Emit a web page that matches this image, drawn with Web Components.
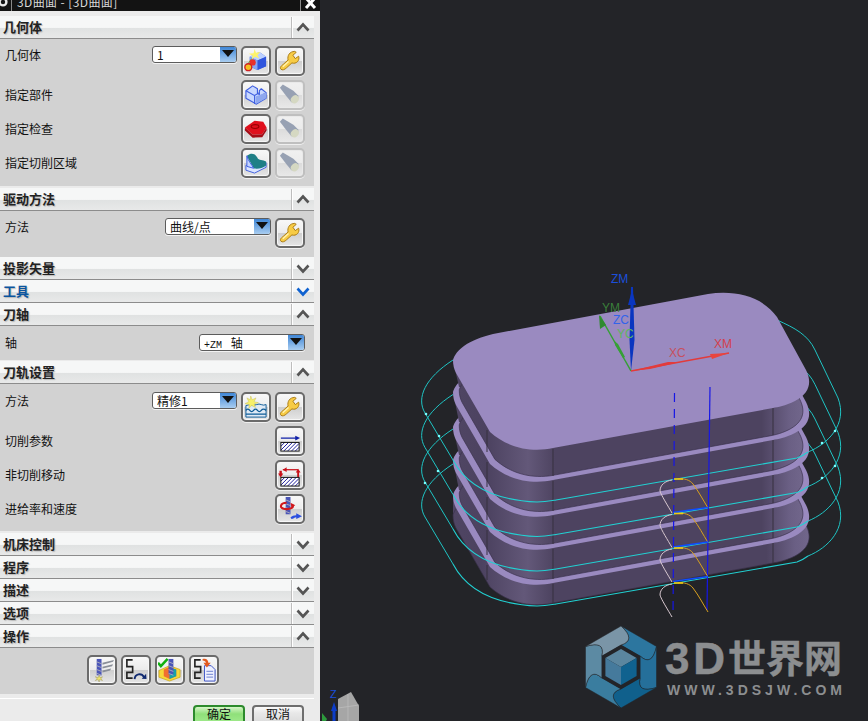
<!DOCTYPE html>
<html>
<head>
<meta charset="utf-8">
<title>3D曲面</title>
<style>
  html, body { margin: 0; height: 100%; background: #232428; overflow: hidden; }
  body { font: 12px "Noto Sans CJK SC", "Liberation Sans", sans-serif; }
</style>
</head>
<body>
<nx-app>
  <nx-dialog caption="3D曲面 - [3D曲面]">
    <nx-section caption="几何体" open style="--pb:8px;--mb:2px">
      <nx-row label="几何体" top>
        <nx-combo style="--w:85px">1</nx-combo>
        <nx-tool icon="geom"></nx-tool>
        <nx-tool icon="wrench"></nx-tool>
      </nx-row>
      <nx-row label="指定部件"><nx-tool icon="part"></nx-tool><nx-tool icon="flash" off></nx-tool></nx-row>
      <nx-row label="指定检查"><nx-tool icon="check"></nx-tool><nx-tool icon="flash" off></nx-tool></nx-row>
      <nx-row label="指定切削区域"><nx-tool icon="area"></nx-tool><nx-tool icon="flash" off></nx-tool></nx-row>
    </nx-section>
    <nx-section caption="驱动方法" open style="--pb:9px">
      <nx-row label="方法" top>
        <nx-combo style="--w:106px">曲线/点</nx-combo>
        <nx-tool icon="wrench"></nx-tool>
      </nx-row>
    </nx-section>
    <nx-section caption="投影矢量"></nx-section>
    <nx-section caption="工具" hot></nx-section>
    <nx-section caption="刀轴" open style="--pt:8px;--pb:9px;--mb:1px">
      <nx-row label="轴" top>
        <nx-combo style="--w:106px"><span style="font:10px 'Liberation Mono',monospace">+ZM </span> 轴</nx-combo>
      </nx-row>
    </nx-section>
    <nx-section caption="刀轨设置" open style="--pt:8px;--pb:7px;--mb:2px">
      <nx-row label="方法" top>
        <nx-combo style="--w:85px">精修1</nx-combo>
        <nx-tool icon="method"></nx-tool>
        <nx-tool icon="wrench"></nx-tool>
      </nx-row>
      <nx-row label="切削参数"><nx-tool icon="cut"></nx-tool></nx-row>
      <nx-row label="非切削移动"><nx-tool icon="noncut"></nx-tool></nx-row>
      <nx-row label="进给率和速度"><nx-tool icon="feed"></nx-tool></nx-row>
    </nx-section>
    <nx-section caption="机床控制"></nx-section>
    <nx-section caption="程序"></nx-section>
    <nx-section caption="描述"></nx-section>
    <nx-section caption="选项"></nx-section>
    <nx-section caption="操作" open center style="--pb:9px">
      <nx-row center>
        <nx-tool icon="gen"></nx-tool><nx-tool icon="replay"></nx-tool><nx-tool icon="verify"></nx-tool><nx-tool icon="list"></nx-tool>
      </nx-row>
    </nx-section>
    <nx-footer></nx-footer>
  </nx-dialog>
  <cam-view><site-logo></site-logo></cam-view>
</nx-app>

<script>
class NxApp extends HTMLElement {
  constructor() {
    super()
    this.attachShadow({ mode: 'open' })
    this.shadowRoot.innerHTML = `
      <style>
        :host { display: flex; width: 868px; height: 721px; overflow: hidden; }
      </style>
      <slot></slot>`
  }
}

class NxDialog extends HTMLElement {
  constructor() {
    super()
    this.attachShadow({ mode: 'open' })
  }
  connectedCallback() {
    this.shadowRoot.innerHTML = `
      <style>
        :host { display: block; width: 320px; height: 721px; flex: none; background: #ebebeb; overflow: hidden; }
        #bar { height: 11px; background: #131313; color: #d8d8d8; display: flex; overflow: hidden; }
        #gear { width: 11px; border-right: 1px solid #8a8a8a; flex: none; }
        #gear svg { display: block; margin-top: -3px; margin-left: -2px; }
        #cap { flex: 1; line-height: 12px; margin-top: -4px; padding-left: 5px; font-size: 12px; letter-spacing: .4px; white-space: pre; }
        #close { width: 19px; border-left: 1px solid #8a8a8a; flex: none; }
        #close svg { display: block; margin: -1px 0 0 3px; }
        #main { padding: 5px 6px 0 0; }
      </style>
      <div id="bar">
        <div id="gear"><svg width="11" height="11" viewBox="0 0 11 11"><circle cx="5" cy="5" r="3.4" fill="none" stroke="#e8e8e8" stroke-width="2.4"/></svg></div>
        <div id="cap">${this.getAttribute('caption')}</div>
        <div id="close"><svg width="14" height="12" viewBox="0 0 14 12"><path d="M2 -1L11 9M11 -1L2 9" stroke="#fff" stroke-width="3"/></svg></div>
      </div>
      <div id="main"><slot></slot></div>`
  }
}

class NxSection extends HTMLElement {
  constructor() {
    super()
    this.attachShadow({ mode: 'open' })
  }
  connectedCallback() {
    const open = this.hasAttribute('open')
    const hot = this.hasAttribute('hot')
    const chev = open ? 'M-5.5 3L0 -3L5.5 3' : 'M-5.5 -3L0 3L5.5 -3'
    this.shadowRoot.innerHTML = `
      <style>
        :host { display: block; margin-bottom: var(--mb, 0); }
        header {
          height: 22px; display: flex; border-bottom: 1px solid #8c8c8c;
          background: linear-gradient(#f6f7f7 0, #f6f7f7 52%, #e0e2e2 56%, #e8e9e9 100%);
        }
        h2 {
          flex: 1; margin: 0; padding-left: 3px; font-size: 13px; font-weight: 700; line-height: 22px;
          color: ${hot ? '#0b559f' : '#222'}; text-shadow: 1px 1px 1px #b8b8b8;
        }
        .chev { width: 22px; flex: none; margin-top: 1px; border-left: 1px solid #bdbdbd; box-shadow: inset 1px 0 0 #fff; }
        .chev svg { display: block; }
        #body {
          display: ${open ? 'flex' : 'none'}; flex-direction: column; gap: 4px;
          padding: var(--pt, 7px) 9px var(--pb, 8px) 5px; background: #d2d2d2;
        }
      </style>
      <header>
        <h2>${this.getAttribute('caption')}</h2>
        <div class="chev"><svg width="22" height="21" viewBox="-11 -10.5 22 21"><path d="${chev}" fill="none" stroke="${hot ? '#0f62d0' : '#555'}" stroke-width="2.6"/></svg></div>
      </header>
      <div id="body"><slot></slot></div>`
  }
}

class NxRow extends HTMLElement {
  constructor() {
    super()
    this.attachShadow({ mode: 'open' })
  }
  connectedCallback() {
    const label = this.getAttribute('label')
    const top = this.hasAttribute('top')
    const center = this.hasAttribute('center')
    this.shadowRoot.innerHTML = `
      <style>
        :host { display: flex; gap: 4px; align-items: flex-start; color: #111; font-size: 12px; ${center ? 'justify-content: center; margin-right: 5px;' : ''} }
        #label { flex: 1; ${top ? 'line-height: 17px;' : 'align-self: center; line-height: 16px;'} }
      </style>
      ${center ? '' : `<div id="label">${label}</div>`}
      <slot></slot>`
  }
}

class NxCombo extends HTMLElement {
  constructor() {
    super()
    this.attachShadow({ mode: 'open' })
    this.shadowRoot.innerHTML = `
      <style>
        :host {
          display: flex; width: var(--w, 86px); height: 17px; box-sizing: border-box; flex: none;
          border: 1px solid #5c5c5c; border-radius: 3px; background: #fff; overflow: hidden;
          box-shadow: 0 1px 0 #f2f2f2; color: #111;
        }
        #txt { flex: 1; padding-left: 4px; font-size: 12px; line-height: 15px; white-space: pre; }
        #btn { width: 16px; flex: none; background: linear-gradient(#3f86d6, #a9cdf0); display: flex; justify-content: center; }
        #btn svg { display: block; margin-top: 3px; }
      </style>
      <div id="txt"><slot></slot></div>
      <div id="btn"><svg width="12" height="8" viewBox="0 0 12 8"><path d="M0 0H12L6 7Z" fill="#111"/></svg></div>`
  }
}

const hatch = (x, y, w, h) => {
  let d = ''
  for (let i = -h; i < w; i += 4) {
    const x1 = Math.max(i, 0), y1 = h - (x1 - i), x2 = Math.min(i + h, w), y2 = h - (x2 - i)
    d += `M${x + x1} ${y + y1}L${x + x2} ${y + y2}`
  }
  return `<rect x="${x}" y="${y}" width="${w}" height="${h}" fill="#fff"/><path d="${d}" stroke="#1a1a9a" stroke-width="1"/><rect x="${x}" y="${y}" width="${w}" height="${h}" fill="none" stroke="#111" stroke-width="1"/>`
}
const tool = (x, y, h) => `<rect x="${x}" y="${y}" width="5" height="${h}" fill="#4a55b8"/><path d="M${x} ${y + 3}l5 2M${x} ${y + 7}l5 2M${x} ${y + 11}l5 2M${x} ${y + 15}l5 2" stroke="#aab" stroke-width="1"/>`
const ess = `<path d="M8 2H2V9H8V15H2V21H8" transform="translate(1 0)" fill="none" stroke="#222" stroke-width="1.7"/>`

const ICONS = {
  wrench: `<path d="M3 21C1.500 19 3.500 17.500 6 15.500L10.500 11.500C9.500 7 12 2.500 17.500 2.500L19 3.500L15.500 6.500L18 10L21.500 7.500C23 12 19 16 14.500 14.500L9 19.500C7 21.500 4.500 22.500 3 21Z" fill="#f7cb45" stroke="#a97a12" stroke-width="1"/><path d="M5 18.500L11 13" stroke="#fff3b0" stroke-width="1.500"/>`,
  geom: `<path d="M6 8L16 3L23 8V18L14 22L6 18Z" fill="#3d63e0"/><path d="M6 8L16 3L23 8L14 12Z" fill="#bcd0ff"/><path d="M14 12L23 8V18L14 22Z" fill="#2f55dd"/><path d="M6 8L14 12V22L6 18Z" fill="#86a6f5"/><path d="M11 0L12.500 4L17 3L14 6.500L16 10L11.500 8L8 11L9 7L5 5L10 4.500Z" fill="#fdf46a"/><path d="M8 10L3 17" stroke="#5b3" stroke-width="1"/><circle cx="9" cy="14" r="3.300" fill="#e8302a"/><circle cx="4.500" cy="19" r="3.600" fill="#f4c020" stroke="#d02020" stroke-width="1.400"/>`,
  part: `<path d="M2 8L9 3L14 6V11L16 12V8L18 6L23 10V16L13 22L2 16Z" fill="#c9d8ff" stroke="#3f5fe0" stroke-width="1.200" stroke-linejoin="round"/><path d="M2 8L11 13V22M11 13L16 10M23 10L14 15.500" fill="none" stroke="#3f5fe0" stroke-width="1.100"/><path d="M12 14L23 10V16L12 22Z" fill="#8fa8ef"/>`,
  flash: `<path d="M2 5L5 1.500L16 8L21 13C22 17 19 21 14 20L9 14Z" fill="#97a1b3"/><ellipse cx="17.500" cy="17" rx="4.500" ry="3.800" fill="#d5d8c2" transform="rotate(-45 17.500 17)"/>`,
  check: `<path d="M1 11L11 4L20 5L23.500 11L19 18L9 18.500Z" fill="#e00f1c"/><path d="M9 18.500L19 18L23.500 11V14L19 21L9 21.500L1 14V11Z" fill="#a40c16"/><ellipse cx="11.500" cy="10" rx="4" ry="2" fill="none" stroke="#900" stroke-width="1.200"/>`,
  area: `<path d="M2 15V20L11 23L23 17V12Z" fill="#dbe5ff" stroke="#3f5fe0"/><path d="M3 5C8 1 12 3 14 7C15 10 20 9 23 11V15C19 18 14 19 10 18C8 13 5 10 3 5Z" fill="#1f7f86"/><path d="M3 5C4 10 8 14 10 18L3 16Z" fill="#c5d5ff" stroke="#3f5fe0" stroke-width="1"/>`,
  method: `<path d="M2 11C6 9 9 12 13 10C17 8 19 12 23 10V23H2Z" fill="#dfeaf5" stroke="#0d5b96" stroke-width="1"/><path d="M2 16Q4 13.500 6 16T10 16T14 16T18 16T23 16M2 20H23" fill="none" stroke="#0d5b96" stroke-width="1.400"/><path d="M7 1L8.500 5L12.500 3L10.500 7L15 8L10.500 9.500L12 13L8 11L5 14L5.500 10L1 9L5 7L3 3L6.500 5Z" fill="#f7f06a" stroke="#c9c25a" stroke-width=".5"/>`,
  cut: `<path d="M3 9.500H20" stroke="#0f1fa8" stroke-width="1.300"/><path d="M18 7L23 9.500L18 12Z" fill="#0f1fa8"/>${hatch(3, 14, 19, 9)}`,
  noncut: `<path d="M5 7H21" stroke="#c8101a" stroke-width="1.300"/><path d="M5 4.500L9 7L5 9.500Z" fill="#c8101a" transform="rotate(180 7 7)"/><path d="M1.500 8H4V11H5.500L2.800 15L0 11H1.500Z" fill="#c8101a"/><path d="M22 15V10H23.500L21 6L18.500 10H20V15Z" fill="#c8101a"/>${hatch(3, 15, 19, 9)}`,
  feed: `${tool(8, 0, 18)}<path d="M9 6C2 6 1 12 7 12.500C13 13 17 11 15 8.500" fill="none" stroke="#d0181c" stroke-width="2.200"/><path d="M13 6L18 8.500L14 11Z" fill="#d0181c"/><path d="M13 21C15 20 16 19 19 19V17L25 20L19 23V21C17 21 16 23 14 23Z" fill="#2c50e0"/>`,
  gen: `${tool(7, 1, 17)}<path d="M13 5L25 2L24 4L13 7ZM13 9L24 6.500L23 8.500L13 11ZM13 13L22 11L21 13L13 15Z" fill="#8a8f98"/><path d="M9.500 18L10.500 20.500L13 19.500L11.500 21.500L13 23.500L10 22.500L9.500 25L8.500 22.500L5.500 23.500L7.500 21.500L5.500 19.500L8.500 20.500Z" fill="#f2e66a" stroke="#8a8340" stroke-width=".4"/>`,
  replay: `${ess}<path d="M11 22C11.500 16.500 18 15 21 20" fill="none" stroke="#102a70" stroke-width="2"/><path d="M18.500 21.500L23.500 22L23 16.500Z" fill="#102a70"/>`,
  verify: `<path d="M1 13L12 8L23 12V20L12 24L1 20Z" fill="#f6d93a" stroke="#c8a010" stroke-width=".7"/><path d="M6 12L12 9L19 12V19L12 22L6 19Z" fill="#f07030"/><path d="M12 10L19 12V19L12 22Z" fill="#18a0a8"/>${tool(11, 1, 16)}<path d="M0 5L3 8.500L10 1" fill="none" stroke="#10b010" stroke-width="2.600"/>`,
  list: `${ess}<path d="M13 8H20L24 12V24H13Z" fill="#eef0ff" stroke="#3d55c8" stroke-width="1"/><path d="M15 14H22M15 17H22M15 20H22" stroke="#8898d8" stroke-width="1.200"/><path d="M11 1C15 0 17 2 17 5H19.500L15.500 10L12 5H14.500C14.500 3.500 13 2.500 11 2.500Z" fill="#e25a20"/>`
}

class NxTool extends HTMLElement {
  constructor() {
    super()
    this.attachShadow({ mode: 'open' })
  }
  connectedCallback() {
    const off = this.hasAttribute('off')
    this.shadowRoot.innerHTML = `
      <style>
        :host {
          display: flex; width: 30px; height: 30px; box-sizing: border-box; flex: none;
          align-items: center; justify-content: center; border-radius: 5px;
          border: 2px solid ${off ? '#bfbfbf' : '#6b6b6b'};
          box-shadow: 0 1px 0 #efefef, inset 0 0 0 1px ${off ? '#e9e9e9' : '#f7f7f7'};
          background: linear-gradient(${off ? '#f0f0f0,#ececec 48%,#dcdcdc 52%,#e8e8e8' : '#f8f8f8,#ececec 48%,#cfcfcf 52%,#e6e6e6'});
        }
        svg { display: block; }
      </style>
      <svg width="24" height="24" viewBox="0 0 25 25">${ICONS[this.getAttribute('icon')] || ''}</svg>`
  }
}

class NxFooter extends HTMLElement {
  constructor() {
    super()
    this.attachShadow({ mode: 'open' })
    this.shadowRoot.innerHTML = `
      <style>
        :host { display: block; margin-top: 4px; border-top: 1px solid #fff; }
        #btns { display: flex; justify-content: flex-end; gap: 7px; padding: 6px 10px 0 0; }
        .b {
          width: 52px; height: 24px; box-sizing: border-box; border-radius: 4px; border: 2px solid #6e6e6e;
          text-align: center; font-size: 12px; line-height: 13px; color: #111;
          background: linear-gradient(#fafafa, #e8e8e8 30%, #d6d6d6);
        }
        .ok { border-color: #2c8a2c; background: linear-gradient(#d6f5c8, #8fe07a 35%, #a8ee94); }
      </style>
      <div id="btns"><div class="b ok">确定</div><div class="b">取消</div></div>`
  }
}

class CamView extends HTMLElement {
  constructor() {
    super()
    this.attachShadow({ mode: 'open' })
    const FACE = 'M453 360C456 350 468 340 493 334L708 294C735 290 762 296 777 317L806 370C812 382 810 393 795 401C785 406 778 407 773 408L553 448C535 452 510 450 490 432L456 373C454 369 453 365 453 360Z'

    // neck walls are a bit narrower than the slab below, so the ledge shows on the diagonals too
    const wall = (a, b, inset) => {
      const s = inset ? .965 : 1, dx = inset ? 6 : 0, k = inset ? 2.5 : 0
      return `
      <path d="M453 ${360 + a}L${453 + dx} ${360 + b}H${809 - dx}L809 ${382 + a}Z" fill="url(#side)"/>
      <path d="${FACE}" transform="translate(631 ${372 + b + k}) scale(${s}) translate(-631 -372)" fill="url(#side)" stroke="#39304a" stroke-width=".7"/>
      <path d="M487 ${430 + a}V${425 + b}M553 ${449 + a}V${449 + b}M773 ${408 + a}V${408 + b}" stroke="#37303f" stroke-width="1"/>`
    }
    const face = a => `<path d="${FACE}" transform="translate(0 ${a})" fill="#9a8ac0"/>`

    let block = ''
    const levels = [[135, 155, false], [100, 130, true], [67, 95, true], [32, 62, true], [0, 27, true]]
    for (const [a, b, inset] of levels) block += wall(a, b, inset) + face(a)

    let back = '', front = '', arcs = ''
    for (const d of [0, 34.5, 69, 104]) {
      back += `<path d="M453 ${460 + d}L425 ${413 + d}C416 ${398 + d} 425 ${378 + d} 453 ${360 + d}" />`
      back += `<path d="M808 ${452 + d}C828 ${444 + d} 848 ${424 + d} 838 ${398 + d}L815 ${350 + d}C808 ${335 + d} 795 ${328 + d} 777 ${320 + d}" />`
      front += `<path d="M453 ${460 + d}C465 ${483 + d} 490 ${500 + d} 537 ${502 + d}C545 ${502 + d} 550 ${501 + d} 556 ${500 + d}L797 ${458 + d}C800 ${457 + d} 804 ${455 + d} 808 ${452 + d}" />`
      arcs += `<g transform="translate(0 ${d})" fill="none">
        <path d="M672 480C665 481 660 485 660 491C661 495 668 506 672 513" stroke="#d8c8d0"/>
        <path d="M678 479C684 478 690 480 693 484C699 492 703 500 708 508" stroke="#d8a020"/>
        <path d="M674 479H683" stroke="#f2cc10" stroke-width="1.600"/>
        ${d < 104 ? '<path d="M673 512.500L708 507.500" stroke="#0f4dff" stroke-width="1.600"/>' : ''}
      </g>`
    }
    const dots = [[426, 414], [439, 436], [438, 471], [425, 483], [835, 466], [822, 478], [822, 443], [835, 431]]
      .map(p => `<circle cx="${p[0]}" cy="${p[1]}" r="1.300" fill="#7ff"/>`).join('')

    this.shadowRoot.innerHTML = `
      <style>
        :host { display: block; position: relative; width: 548px; height: 721px; flex: none; background: #232428; overflow: hidden; }
        svg { display: block; }
        text { font-family: "Liberation Sans", sans-serif; font-size: 12px; }
      </style>
      <svg width="548" height="721" viewBox="320 0 548 721">
        <defs>
          <linearGradient id="side" gradientUnits="userSpaceOnUse" x1="453" x2="809" y1="0" y2="0">
            <stop offset="0" stop-color="#4f4563"/>
            <stop offset=".08" stop-color="#4c4260"/>
            <stop offset=".2" stop-color="#635879"/>
            <stop offset=".28" stop-color="#4d4360"/>
            <stop offset=".88" stop-color="#4d4360"/>
            <stop offset=".96" stop-color="#6a5f84"/>
            <stop offset="1" stop-color="#71668b"/>
          </linearGradient>
        </defs>
        <g fill="none" stroke="#1fc4c4" stroke-width="1">${back}</g>
        ${dots}
        ${block}
        <g fill="none" stroke="#22d0d2" stroke-width="1.100">${front}</g>
        <path d="M710 387L707 610" stroke="#1616e6" stroke-width="1.200"/>
        <path d="M674.500 393L673 617" stroke="#1616e6" stroke-width="1.200" stroke-dasharray="9 7"/>
        ${arcs}

        <path d="M631 371L629.500 340L631 287L633 287L634.500 340Z" fill="#0a36c0"/>
        <path d="M632 290L636 305H628Z" fill="#0a36c0"/>
        <path d="M631 371L600 316" stroke="#35a035" stroke-width="1.500"/>
        <path d="M623 358L615 345L614.500 341L618 344L625 357Z" fill="#35a035"/>
        <path d="M599 315L606 325L600 329Z" fill="#2f8a2f"/>
        <path d="M631 371L729 353" stroke="#e23b3b" stroke-width="1.300"/>
        <path d="M631 371L668 362L680 362L650 369Z" fill="#e23b3b"/>
        <path d="M710 354L729 353L712 359Z" fill="#e8453f"/>
        <text x="611" y="283" fill="#1c4fdc">ZM</text>
        <text x="602" y="312" fill="#3a7f3a">YM</text>
        <text x="613" y="324" fill="#3264ea">ZC</text>
        <text x="617" y="338" fill="#5eb45e">YC</text>
        <text x="669" y="357" fill="#c6505f">XC</text>
        <text x="714" y="348" fill="#d4404c">XM</text>

        <path d="M338 699L351 692L359 706V721H338Z" fill="#a6a6a6"/>
        <path d="M338 708L359 705M348 694V721" stroke="#bcbcbc" stroke-width=".8"/>
        <path d="M322 713L327 719L326 721H322Z" fill="#2c9a3c"/>
        <path d="M334 702L337 711H335.500V721H332.500V711H331Z" fill="#0c3cc8"/>
        <text x="330" y="698" fill="#1a4fdc" style="font-size:11px">Z</text>
      </svg>
      <slot></slot>`
  }
}

class SiteLogo extends HTMLElement {
  constructor() {
    super()
    this.attachShadow({ mode: 'open' })
    const cx = 621, cy = 667
    const pt = (r, i) => {
      const a = (-90 + 60 * i) * Math.PI / 180
      return [cx + r * Math.cos(a), cy + r * Math.sin(a)].map(v => v.toFixed(1)).join(' ')
    }
    const colors = ['#2c769f', '#256f9a', '#10608c', '#3a7d9f', '#5c8aa3', '#7a95a7']
    let blades = ''
    colors.forEach((c, i) => {
      blades += `<path d="M${pt(41, i)}L${pt(41, i + 1)}Q${pt(31, i + 1.5)} ${pt(22, i + 1)}L${pt(22, i)}Q${pt(31, i + 0.5)} ${pt(41, i)}Z" fill="${c}" stroke="#232428" stroke-width=".5"/>`
    })
    this.shadowRoot.innerHTML = `
      <style>
        :host { display: block; position: absolute; left: 250px; top: 615px; width: 298px; height: 106px; }
        svg { display: block; }
      </style>
      <svg width="298" height="106" viewBox="570 615 298 106">
        ${blades}
        <path d="M${pt(22, 0)}L${pt(22, 1)}L${pt(22, 2)}L${pt(22, 3)}L${pt(22, 4)}L${pt(22, 5)}Z" fill="#232428"/>
        <path d="M${pt(18, 0)}L${pt(18, 1)}L${cx} ${cy}L${pt(18, 5)}Z" fill="#5b869f"/>
        <path d="M${pt(18, 5)}L${cx} ${cy}L${pt(18, 3)}L${pt(18, 4)}Z" fill="#457a9c"/>
        <path d="M${pt(18, 1)}L${pt(18, 2)}L${pt(18, 3)}L${cx} ${cy}Z" fill="#10628f"/>
        <text x="665" y="674" fill="#8c8e90" stroke="#8c8e90" stroke-width=".5" font-family="Liberation Sans" font-weight="700" font-size="44" textLength="60">3D</text>
        <text x="728" y="672" fill="#8c8e90" stroke="#8c8e90" stroke-width=".5" font-family="Noto Sans CJK SC" font-weight="700" font-size="38" textLength="114">世界网</text>
        <text x="667" y="695" fill="#8c8e90" font-family="Liberation Sans" font-weight="700" font-size="14" textLength="175">WWW.3DSJW.COM</text>
      </svg>`
  }
}

customElements.define('nx-app', NxApp)
customElements.define('nx-dialog', NxDialog)
customElements.define('nx-section', NxSection)
customElements.define('nx-row', NxRow)
customElements.define('nx-combo', NxCombo)
customElements.define('nx-tool', NxTool)
customElements.define('nx-footer', NxFooter)
customElements.define('cam-view', CamView)
customElements.define('site-logo', SiteLogo)
</script>
</body>
</html>
